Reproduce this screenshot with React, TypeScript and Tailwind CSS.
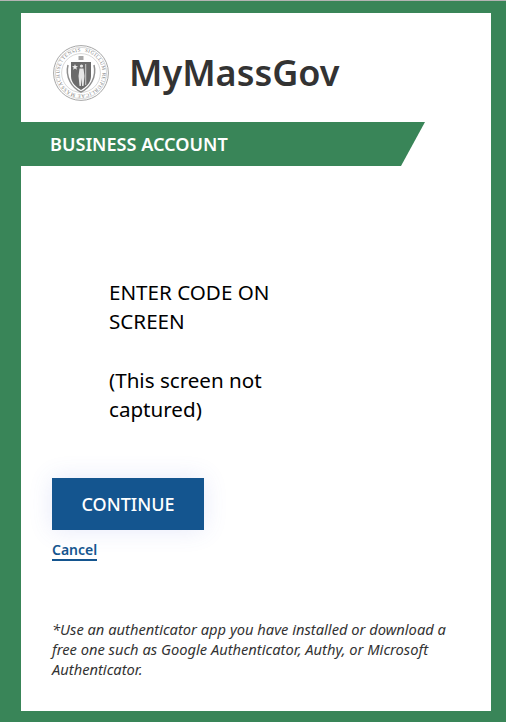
const sealText = "SIGILLUM REIPUBLICAE MASSACHUSETTENSIS";

function Seal() {
  return (
    <svg width="56" height="56" viewBox="0 0 56 56" className="shrink-0">
      <defs>
        <path id="seal-ring" d="M28 28 m-21.5 0 a21.5 21.5 0 1 1 43 0 a21.5 21.5 0 1 1 -43 0" />
      </defs>
      <circle cx="28" cy="28" r="27.4" fill="#fff" stroke="#a6a6a6" strokeWidth="1" />
      <circle cx="28" cy="28" r="25.6" fill="none" stroke="#c9c9c9" strokeWidth="0.7" />
      <circle cx="28" cy="28" r="19.4" fill="none" stroke="#bdbdbd" strokeWidth="0.6" />
      <text fontSize="5" fill="#777" fontFamily="Liberation Serif, serif" textLength="130" transform="rotate(100 28 28)">
        <textPath href="#seal-ring">{sealText}</textPath>
      </text>
      {/* crest above the shield */}
      <path d="M25.5 11 h5 v4 h-5 Z" fill="#a8a8a8" />
      {/* mantling round the shield */}
      <path d="M15 20 C12 32 19 43 28 47 C37 43 44 32 41 20" fill="none" stroke="#8f8f8f" strokeWidth="1.5" />
      {/* shield */}
      <path d="M18 17 H38 V31 C38 38 33 42 28 45 C23 42 18 38 18 31 Z" fill="#6b6b6b" />
      {/* star and figure */}
      <path d="M22 19 l0.8 2.1 2.2 0.1 -1.7 1.4 0.6 2.1 -1.9 -1.2 -1.9 1.2 0.6 -2.1 -1.7 -1.4 2.2 -0.1 Z" fill="#ececec" />
      <circle cx="28.5" cy="21" r="1.6" fill="#e6e6e6" />
      <path d="M26.5 23.5 H30.5 L31.5 31 L30.5 41 H29.1 L28.5 33 L27.9 41 H26.5 L25.5 31 Z" fill="#e6e6e6" />
      <path d="M32.7 19 V40" stroke="#e6e6e6" strokeWidth="0.8" />
    </svg>
  );
}

export default function App() {
  return (
    <div className="h-[722px] w-[506px] border-t border-[#b4b4b4] bg-[#398558] px-[15px] pb-[11px] pt-3 font-['Noto_Sans','Open_Sans',sans-serif]">
      <div className="ml-[6px] flex h-[698px] w-[470px] flex-col bg-white">
        <header className="flex h-[109px] items-center gap-[20px] pl-[32px] pt-[11px]">
          <Seal />
          <h1 className="text-[36px] font-semibold leading-none text-[#333333]">MyMassGov</h1>
        </header>

        <div className="flex h-[44px] w-[404px] items-center bg-[#398558] pl-[29px] pt-[1px] [clip-path:polygon(0_0,100%_0,380px_100%,0_100%)]">
          <span className="text-[18.1px] font-semibold text-white">BUSINESS ACCOUNT</span>
        </div>

        <div className="ml-[88px] mt-[112px] w-[190px] text-[20.6px] leading-[29.3px] text-black">
          <p>ENTER CODE ON SCREEN</p>
          <p className="mt-[29px]">(This screen not captured)</p>
        </div>

        <div className="ml-[31px] mt-[54px] flex flex-col items-start">
          <button className="h-[52px] w-[152px] bg-[#14558f] text-[18px] font-medium text-white shadow-[0_0_24px_rgba(80,100,220,0.14)]">
            CONTINUE
          </button>
          <a className="mt-[11px] border-b-2 border-[#14558f] text-[14px] font-semibold leading-[18px] text-[#14558f]">
            Cancel
          </a>
        </div>

        <p className="ml-[31px] mt-[58px] w-[410px] text-[14.7px] italic leading-[20px] text-[#333333]">
          *Use an authenticator app you have installed or download a free one such as Google Authenticator, Authy, or Microsoft Authenticator.
        </p>
      </div>
    </div>
  );
}
